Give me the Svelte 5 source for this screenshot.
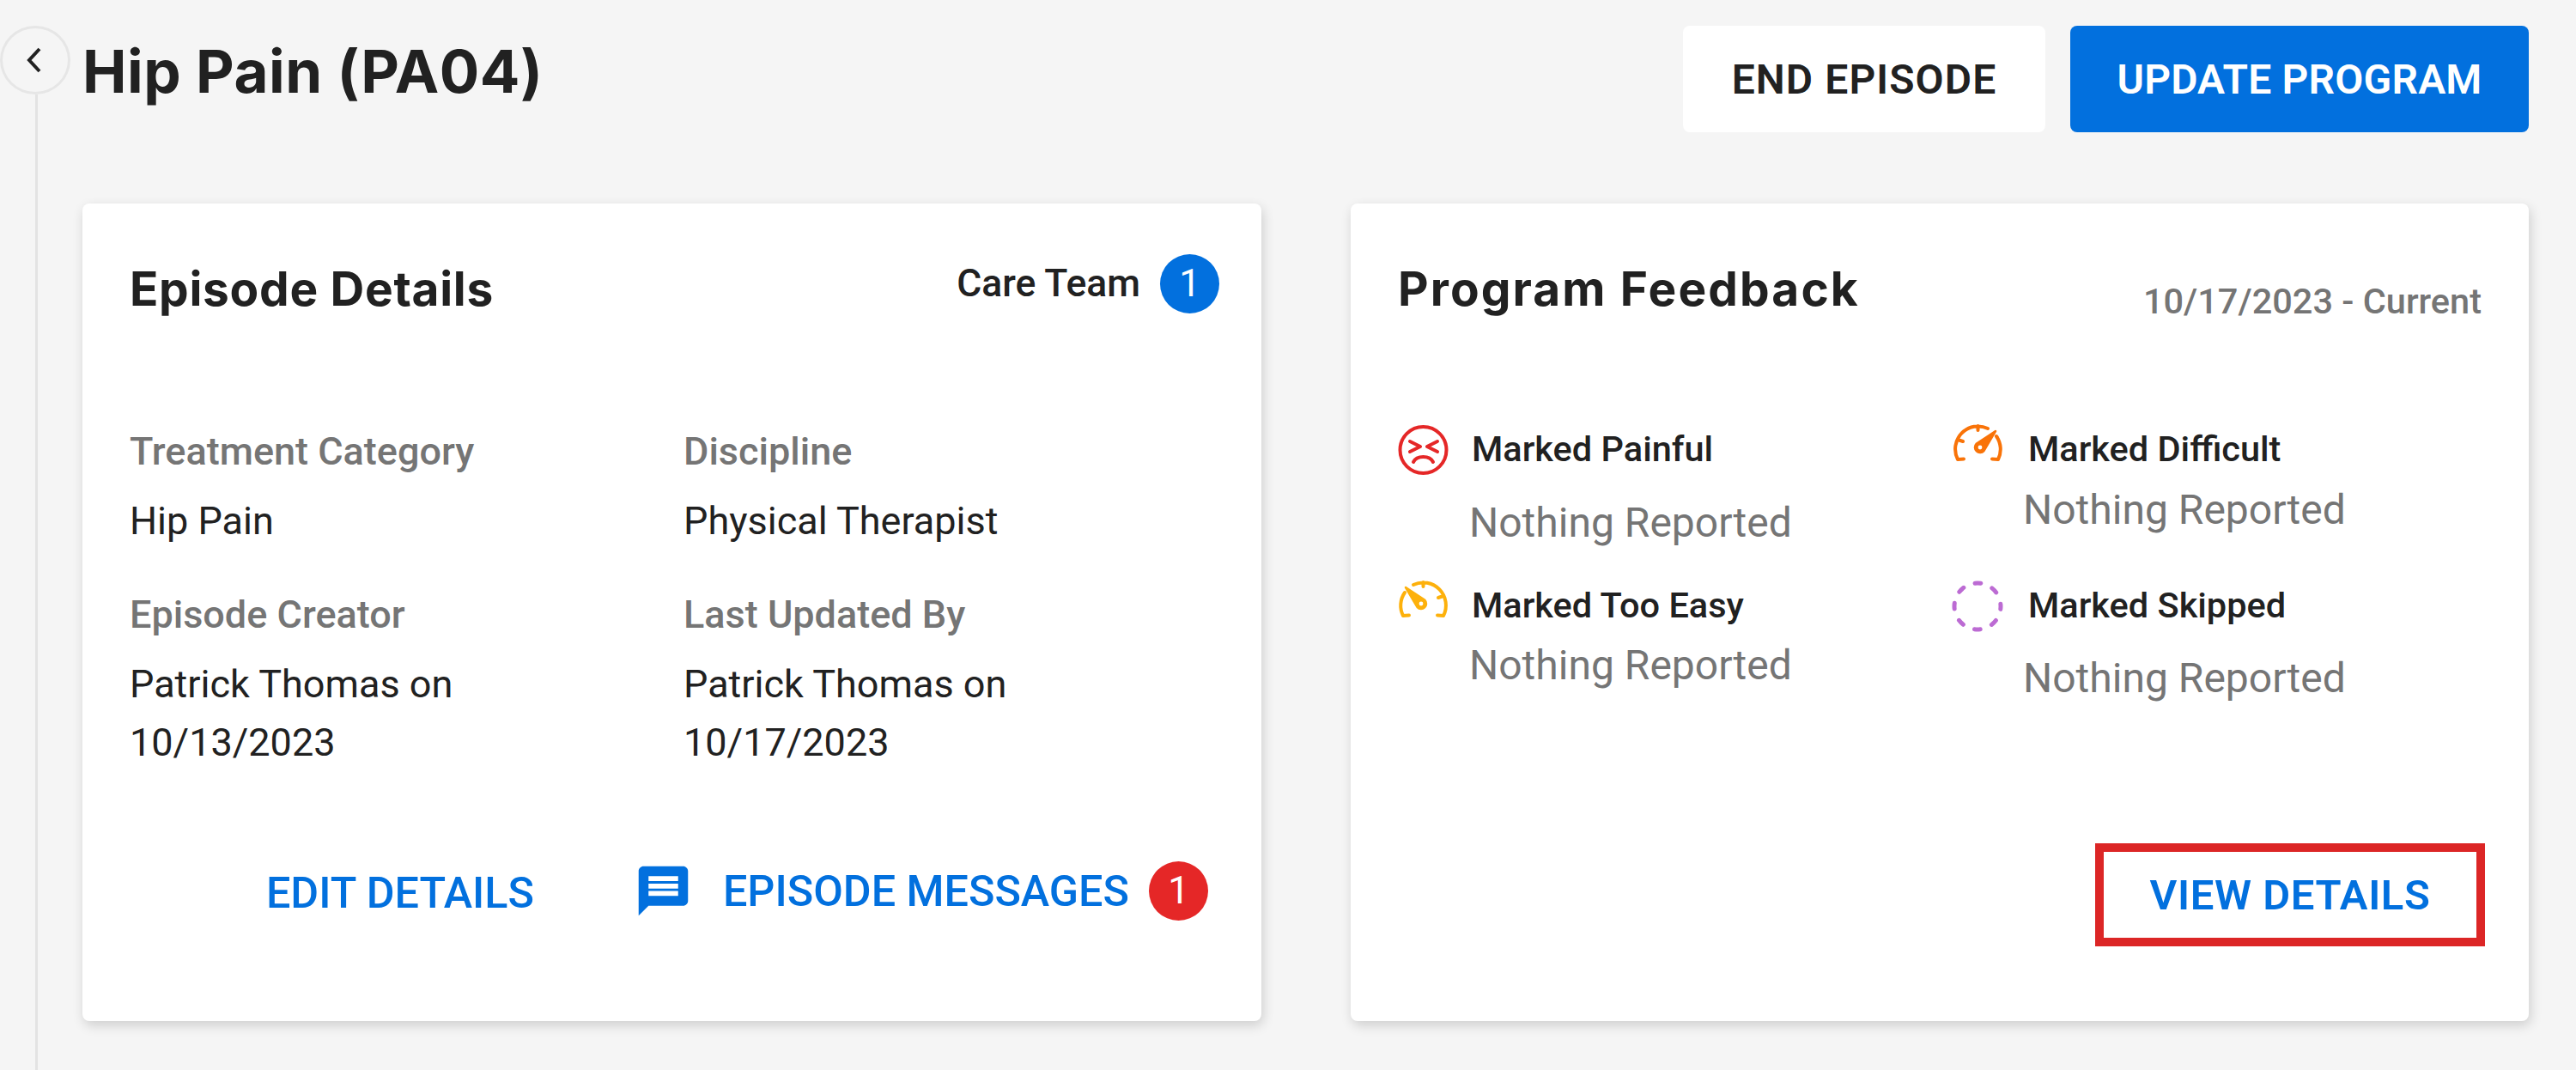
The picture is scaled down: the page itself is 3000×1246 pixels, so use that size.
<script>
  const details = [
    { label: 'Treatment Category', lines: ['Hip Pain'] },
    { label: 'Discipline', lines: ['Physical Therapist'] },
    { label: 'Episode Creator', lines: ['Patrick Thomas on', '10/13/2023'] },
    { label: 'Last Updated By', lines: ['Patrick Thomas on', '10/17/2023'] }
  ];
  const feedback = [
    { label: 'Marked Painful', icon: 'pain', cls: 'wide' },
    { label: 'Marked Difficult', icon: 'hard', cls: 'tight col2' },
    { label: 'Marked Too Easy', icon: 'easy', cls: 'tight' },
    { label: 'Marked Skipped', icon: 'skip', cls: 'wide col2' }
  ];
</script>

{#snippet gauge()}
  <path d="M17 5A26.5 26.5 0 0 1 52 41L45 40.5M7 14A26.5 26.5 0 0 0 5 41L12 40.5M28.5 2V7M46 20L52 18" />
  <path class="solid" d="M8 8L30.4 22.9A6 6 0 1 1 21.6 31.1Z" />
  <circle class="hole" cx="26" cy="27" r="2.4" />
{/snippet}

<div class="page">
  <div class="rail">
    <button class="back" aria-label="Back">
      <svg viewBox="0 0 18 30" width="18" height="30"><path d="M15 2L3 15L15 28" /></svg>
    </button>
    <div class="rail-line"></div>
  </div>

  <main>
    <header>
      <h1>Hip Pain (PA04)</h1>
      <div class="actions">
        <button class="btn end">END EPISODE</button>
        <button class="btn update">UPDATE PROGRAM</button>
      </div>
    </header>

    <div class="cards">
      <section class="card left">
        <div class="head">
          <h2>Episode Details</h2>
          <div class="care">Care Team <span class="count blue">1</span></div>
        </div>
        <div class="details">
          {#each details as d}
            <div class="field">
              <div class="label">{d.label}</div>
              <div class="value">{#each d.lines as l}<div>{l}</div>{/each}</div>
            </div>
          {/each}
        </div>
        <div class="foot">
          <span class="link edit">EDIT DETAILS</span>
          <svg class="msg" viewBox="0 0 24 24" width="69" height="69"><path d="M20 2H4c-1.1 0-2 .9-2 2v18l4-4h14c1.1 0 2-.9 2-2V4c0-1.1-.9-2-2-2zm-2 12H6v-2h12v2zm0-3H6V9h12v2zm0-3H6V6h12v2z" /></svg>
          <span class="link">EPISODE MESSAGES</span>
          <span class="count red">1</span>
        </div>
      </section>

      <section class="card right">
        <div class="head">
          <h2>Program Feedback</h2>
          <div class="date">10/17/2023 - Current</div>
        </div>
        <div class="feedback">
          {#each feedback as f}
            <div class="item {f.cls}">
              <div class="item-row">
                <svg class="ficon {f.icon}" viewBox="0 0 58 58" width="58" height="58">
                  {#if f.icon === 'pain'}
                    <circle cx="28.5" cy="30" r="27" />
                    <path d="M13 20L25 26L13 32M45 20L33 26L45 32M17 44C21 36 36 36 40 44" />
                  {:else if f.icon === 'skip'}
                    <circle class="dashed" cx="29" cy="30" r="27" />
                  {:else if f.icon === 'hard'}
                    <g transform="translate(58 0) scale(-1 1)">{@render gauge()}</g>
                  {:else}
                    {@render gauge()}
                  {/if}
                </svg>
                <span class="item-label">{f.label}</span>
              </div>
              <div class="nothing">Nothing Reported</div>
            </div>
          {/each}
        </div>
        <div class="foot view">
          <span class="view-btn">VIEW DETAILS</span>
        </div>
      </section>
    </div>
  </main>
</div>

<style>
  :global(body) { margin: 0; background: #f5f5f5; font-family: Roboto, "Liberation Sans", sans-serif; color: #212121; }
  button { font-family: inherit; cursor: pointer; }

  .page { display: flex; height: 1246px; overflow: hidden; }

  .rail { width: 96px; flex: none; padding-top: 30px; box-sizing: border-box; display: flex; flex-direction: column; }
  .back { width: 82px; height: 80px; padding: 0; border: 3px solid #e6e6e6; border-radius: 50%; background: #f5f5f5; display: flex; align-items: center; justify-content: center; }
  .back svg { fill: none; stroke: #212121; stroke-width: 4; margin-right: 2px; }
  .rail-line { width: 3px; flex: 1; background: #e3e3e3; margin-left: 41px; }

  main { flex: 1; padding: 30px 55px 0 0; }
  header { display: flex; justify-content: space-between; align-items: flex-start; height: 124px; margin-bottom: 83px; }
  h1 { margin: 0; font: 700 69px/106px Inter, sans-serif; letter-spacing: 0.5px; }
  .actions { display: flex; gap: 29px; }
  .btn { height: 124px; border: none; border-radius: 8px; font-size: 48px; font-weight: 600; letter-spacing: 0.2px; }
  .end { width: 422px; background: #fff; color: #212121; letter-spacing: 1.1px; }
  .update { width: 534px; background: #0270de; color: #fff; }

  .cards { display: grid; grid-template-columns: 1373px 1372px; gap: 104px; }
  .card { height: 952px; box-sizing: border-box; background: #fff; border-radius: 8px; box-shadow: 2px 5px 14px rgba(0, 0, 0, 0.16); padding: 59px 49px 0 55px; display: flex; flex-direction: column; }
  .card.right { padding-right: 55px; }

  .head { display: flex; justify-content: space-between; align-items: flex-start; height: 80px; }
  h2 { margin: 0; font: 700 55px/80px Inter, sans-serif; letter-spacing: 0.7px; }
  .right h2 { letter-spacing: 2.1px; }
  .care { display: flex; align-items: center; gap: 23px; font-size: 44.5px; font-weight: 500; line-height: 69px; }
  .count { width: 69px; height: 69px; border-radius: 50%; color: #fff; font-size: 44px; font-weight: 400; line-height: 69px; text-align: center; flex: none; }
  .blue { background: #0270de; }
  .red { background: #e52727; }

  .details { display: grid; grid-template-columns: 645px 1fr; row-gap: 41px; margin-top: 116px; }
  .label { font-size: 45px; font-weight: 500; line-height: 68px; color: #757575; margin-bottom: 13px; }
  .value { font-size: 45px; line-height: 68px; color: #212121; }

  .foot { margin-top: auto; padding-bottom: 115px; display: flex; justify-content: flex-end; align-items: center; padding-right: 13px; }
  .link { font-size: 50.3px; font-weight: 500; color: #0270de; line-height: 69px; }
  .edit { margin: 5px 116px 0 0; }
  .msg { fill: #0270de; margin-right: 35px; }
  .foot .count { margin-left: 23px; }

  .date { margin-top: 31px; font-size: 41.5px; font-weight: 500; line-height: 48px; color: #757575; }

  .feedback { display: grid; grid-template-columns: 645px 1fr; grid-auto-rows: 182px; margin: 122px 0 0 1px; }
  .item-row { display: flex; align-items: center; height: 50px; gap: 27px; }
  .item.col2 .item-row { gap: 30px; }
  .item-label { font-size: 41.5px; font-weight: 500; line-height: 50px; }
  .nothing { font-size: 48px; line-height: 56px; color: #757575; padding-left: 82px; }
  .wide .nothing { margin-top: 33px; }
  .tight .nothing { margin-top: 18px; }
  .item:nth-child(3) .nothing { margin-top: 17px; }
  .item:nth-child(4) .nothing { margin-top: 32px; }

  .ficon { flex: none; overflow: visible; fill: none; stroke-width: 4; stroke-linecap: round; stroke-linejoin: round; }
  .ficon.pain { stroke: #e52727; }
  .ficon.easy { color: #fdb10c; stroke: #fdb10c; }
  .ficon.hard { color: #f97308; stroke: #f97308; }
  .ficon.skip { stroke: #bc6bd3; }
  .dashed { stroke-width: 5; stroke-dasharray: 7 14.2; stroke-dashoffset: 3.5; }
  .solid { fill: currentColor; stroke: currentColor; stroke-width: 2.5; }
  .hole { fill: #fff; stroke: none; }

  .foot.view { padding: 0 0 87px; margin-right: -4px; }
  .view-btn { box-sizing: border-box; width: 454px; height: 120px; border: 10px solid #dc2626; font-size: 49px; font-weight: 600; letter-spacing: 0.6px; color: #0270de; display: flex; align-items: center; justify-content: center; }
</style>
